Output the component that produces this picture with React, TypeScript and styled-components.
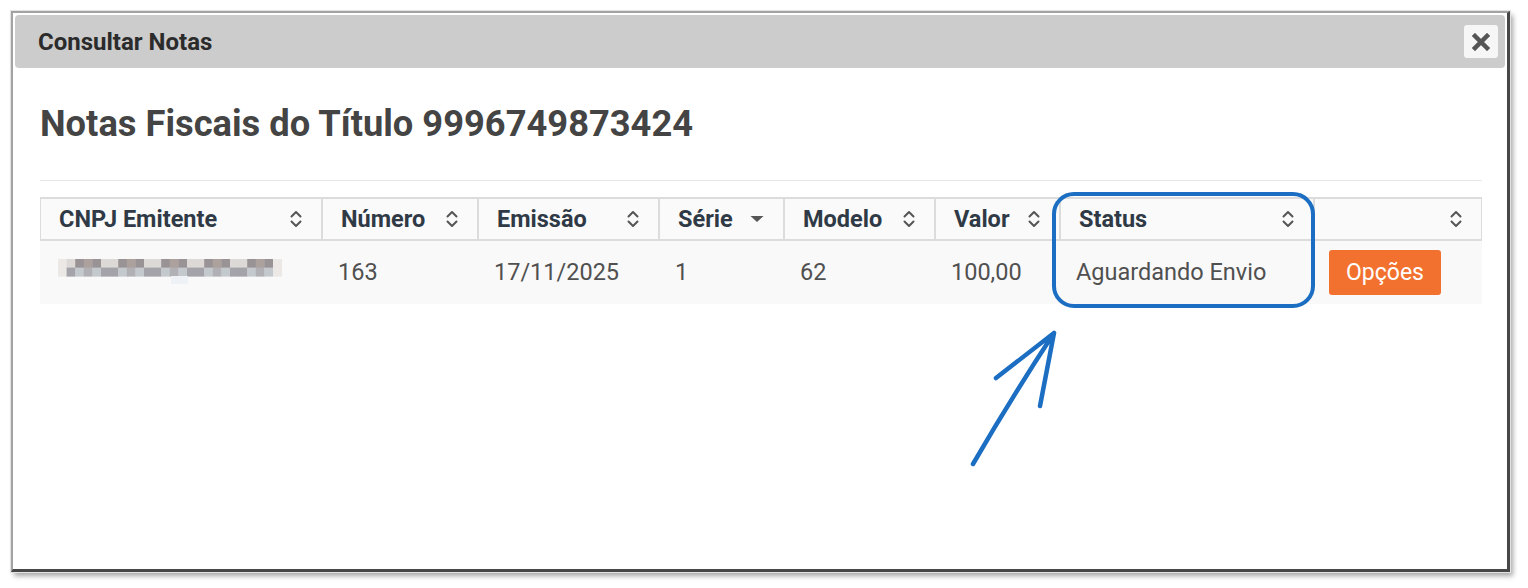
import React from "react";
import styled, { createGlobalStyle } from "styled-components";

const GlobalStyle = createGlobalStyle`
  html, body {
    margin: 0;
    padding: 0;
    background: #ffffff;
  }
  body {
    font-family: Roboto, "Liberation Sans", Arial, sans-serif;
  }
`;

interface Column {
  label: string;
  sort: "both" | "desc";
}

const columns: Column[] = [
  { label: "CNPJ Emitente", sort: "both" },
  { label: "Número", sort: "both" },
  { label: "Emissão", sort: "both" },
  { label: "Série", sort: "desc" },
  { label: "Modelo", sort: "both" },
  { label: "Valor", sort: "both" },
  { label: "Status", sort: "both" },
  { label: "", sort: "both" },
];

const row = ["163", "17/11/2025", "1", "62", "100,00", "Aguardando Envio"];

// pixelated (censored) CNPJ
const mosaicPalette = [
  "#dcd9d7",
  "#b0b0b5",
  "#cfd0d4",
  "#a3a3a9",
  "#e8e8ea",
  "#bab9be",
  "#9a9395",
  "#d3d9df",
  "#ada19d",
  "#c4c9ce",
];

function Mosaic() {
  const cols = 26;
  const cell = 8.6;
  const rects: React.ReactElement[] = [];
  for (let r = 0; r < 2; r++) {
    for (let c = 0; c < cols; c++) {
      const seed = (c * 7 + r * 13 + c * c * 3) % mosaicPalette.length;
      const edge = c === 0 || c === cols - 1;
      rects.push(
        <rect
          key={`${r}-${c}`}
          x={c * cell}
          y={r * cell}
          width={cell + 0.4}
          height={cell + 0.4}
          fill={edge ? "#ece8e6" : mosaicPalette[seed]}
        />
      );
    }
  }
  rects.push(<rect key="tail" x={113} y={17} width={17} height={8} fill="#eef2f6" />);
  return (
    <svg width={cols * cell} height={26} viewBox={`0 0 ${cols * cell} 26`}>
      {rects}
    </svg>
  );
}

function SortBoth() {
  return (
    <svg width="12" height="20" viewBox="0 0 12 20">
      <path
        d="M1.5 7.5 L6 3 L10.5 7.5 M1.5 12.5 L6 17 L10.5 12.5"
        fill="none"
        stroke="#555"
        strokeWidth="2"
        strokeLinecap="round"
        strokeLinejoin="round"
      />
    </svg>
  );
}

function SortDesc() {
  return (
    <svg width="14" height="20" viewBox="0 0 14 20">
      <path d="M0.5 7 L13.5 7 L7 13 Z" fill="#555" />
    </svg>
  );
}

export default function App() {
  return (
    <>
      <GlobalStyle />
      <Page>
        <Window>
          <TitleBar>
            <TitleText>Consultar Notas</TitleText>
            <CloseButton aria-label="Fechar">
              <svg width="18" height="18" viewBox="0 0 18 18">
                <path
                  d="M3 3 L15 15 M15 3 L3 15"
                  stroke="#555"
                  strokeWidth="4.5"
                  strokeLinecap="square"
                />
              </svg>
            </CloseButton>
          </TitleBar>

          <Content>
            <Heading>Notas Fiscais do Título 9996749873424</Heading>
            <Divider />

            <Table>
              <HeaderRow>
                {columns.map((col, i) => (
                  <HeaderCell key={i}>
                    <span>{col.label}</span>
                    {col.sort === "desc" ? <SortDesc /> : <SortBoth />}
                  </HeaderCell>
                ))}
              </HeaderRow>
              <BodyRow>
                <BodyCell>
                  <Mosaic />
                </BodyCell>
                {row.map((v, i) => (
                  <BodyCell key={i}>{v}</BodyCell>
                ))}
                <BodyCell $pad={17}>
                  <OptionsButton>Opções</OptionsButton>
                </BodyCell>
              </BodyRow>
            </Table>
          </Content>
        </Window>

        <Annotation width="1528" height="588" viewBox="0 0 1528 588">
          <rect
            x="1054"
            y="194"
            width="259"
            height="112"
            rx="20"
            fill="none"
            stroke="#1b6ec2"
            strokeWidth="4"
          />
          <path
            d="M973 464 Q1010 400 1054 333 M1054 333 L996 378 M1054 333 L1040 406"
            fill="none"
            stroke="#1b6ec2"
            strokeWidth="4.5"
            strokeLinecap="round"
            strokeLinejoin="round"
          />
        </Annotation>
      </Page>
    </>
  );
}

const Page = styled.div`
  position: relative;
  width: 1528px;
  height: 588px;
  padding: 11px 0 0 11px;
  box-sizing: border-box;
  overflow: hidden;
`;

const Window = styled.div`
  box-sizing: border-box;
  width: 1499px;
  height: 561px;
  padding: 2px;
  background: #ffffff;
  border-left: 2px solid #a3a3a3;
  border-top: 2px solid #a3a3a3;
  border-right: 3px solid #474747;
  border-bottom: 3px solid #474747;
  box-shadow: 0 0 0 1px #e2e2e2, 3px 4px 5px rgb(0 0 0 / 0.35);
  display: flex;
  flex-direction: column;
`;

const TitleBar = styled.div`
  height: 53px;
  flex-shrink: 0;
  display: flex;
  align-items: center;
  justify-content: space-between;
  padding: 0 7px 0 23px;
  background: #cccccc;
  border-radius: 4px;
`;

const TitleText = styled.div`
  color: #2b2b2b;
  font-size: 24px;
  font-weight: 700;
`;

const CloseButton = styled.button`
  width: 34px;
  height: 33px;
  display: flex;
  align-items: center;
  justify-content: center;
  padding: 0;
  border: 0;
  border-radius: 3px;
  background: #f6f6f6;
  cursor: pointer;
`;

const Content = styled.div`
  padding: 0 23px 0 25px;
`;

const Heading = styled.h1`
  margin: 34px 0 0;
  color: #444444;
  font-size: 36.3px;
  font-weight: 700;
  line-height: 1.2;
`;

const Divider = styled.div`
  height: 1px;
  margin-top: 34px;
  background: #e8e8e8;
`;

const Table = styled.div`
  margin-top: 16px;
`;

const gridColumns = "280px 156px 181px 125px 151px 125px 254px 1fr";

const HeaderRow = styled.div`
  display: grid;
  grid-template-columns: ${gridColumns};
  height: 44px;
  box-sizing: border-box;
  background: #fafafa;
  border-top: 2px solid #dcdcdc;
  border-bottom: 2px solid #dcdcdc;
  border-left: 1px solid #dcdcdc;
  border-right: 1px solid #dcdcdc;
`;

const HeaderCell = styled.div`
  display: flex;
  align-items: center;
  justify-content: space-between;
  padding: 0 19px 0 18px;
  color: #2f3a46;
  font-size: 23.5px;
  font-weight: 700;
  border-left: 2px solid #dcdcdc;

  &:first-child {
    border-left: 0;
  }
`;

const BodyRow = styled.div`
  display: grid;
  grid-template-columns: ${gridColumns};
  height: 63px;
  background: #f9f9f9;
`;

const BodyCell = styled.div<{ $pad?: number }>`
  display: flex;
  align-items: center;
  padding: 0 0 0 ${({ $pad }) => $pad ?? 18}px;
  color: #505050;
  font-size: 23.5px;
`;

const OptionsButton = styled.button`
  width: 112px;
  height: 45px;
  border: 0;
  border-radius: 3px;
  background: #f3712f;
  color: #ffffff;
  font-family: inherit;
  font-size: 23px;
  cursor: pointer;
`;

const Annotation = styled.svg`
  position: absolute;
  left: 0;
  top: 0;
  pointer-events: none;
`;
